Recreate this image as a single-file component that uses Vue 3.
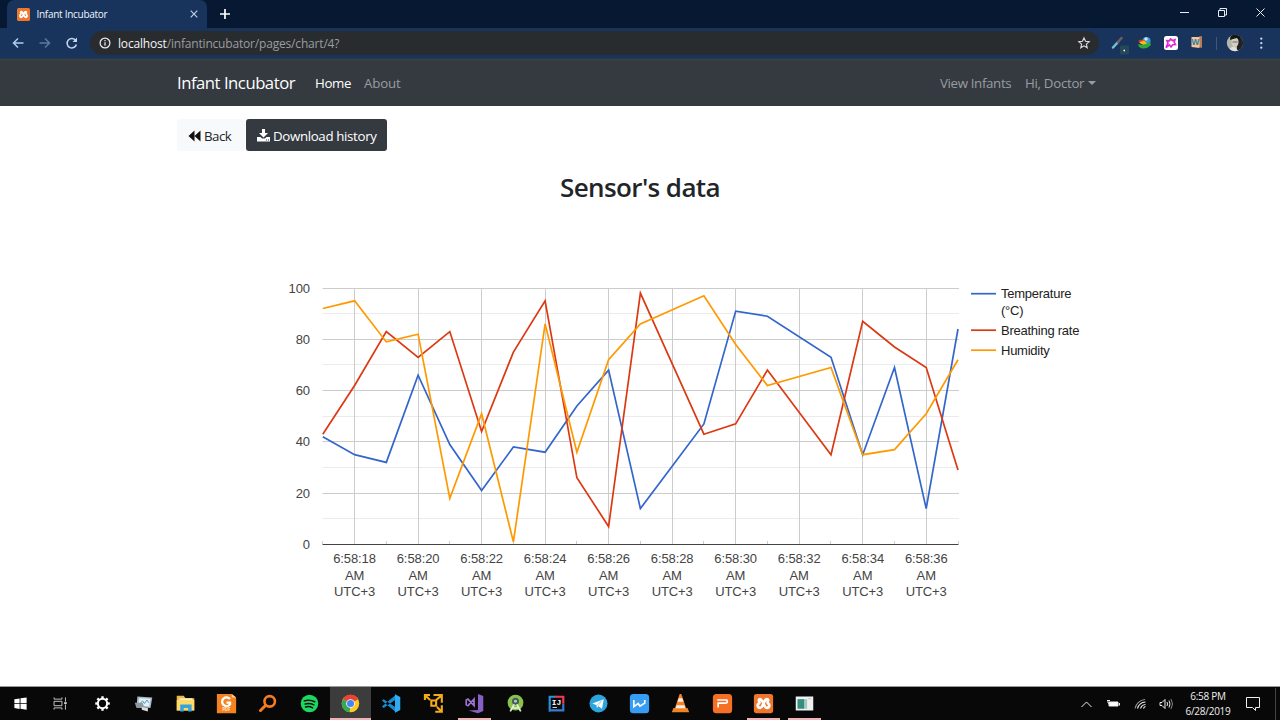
<script setup>
const seconds = [17, 18, 19, 20, 21, 22, 23, 24, 25, 26, 27, 29, 30, 31, 33, 34, 35, 36, 37]
const series = [
  { name: 'Temperature', color: '#3366cc', y: 24, data: [42, 35, 32, 66, 39, 21, 38, 36, 54, 68, 14, 47, 91, 89, 73, 35, 69, 14, 84] },
  { name: 'Breathing rate', color: '#dc3912', y: 60.5, data: [43, 62, 83, 73, 83, 44, 75, 95, 26, 7, 98, 43, 47, 68, 35, 87, 77, 69, 29] },
  { name: 'Humidity', color: '#ff9900', y: 80.5, data: [92, 95, 79, 82, 18, 51, 1, 86, 36, 72, 86, 97, 78, 62, 69, 35, 37, 51, 72] }
]
const px = s => 42.8 + (s - 17) * 31.76
const py = v => 274.5 - v * 2.565
const line = d => d.map((v, i) => `${px(seconds[i]).toFixed(1)},${py(v).toFixed(1)}`).join(' ')
const major = [18, 20, 22, 24, 26, 28, 30, 32, 34, 36]
const minor = [17, 19, 21, 23, 25, 27, 29, 31, 33, 35, 37]
const loop = 'M8.200 7C11.500 7 12.500 17 15.800 17S19.300 13 17.300 12S19.100 7 15.800 7C12.500 7 11.500 17 8.200 17S4.700 13 6.700 12S4.900 7 8.200 7z'
</script>

<template>
  <div class="screen">
    <header class="tabs">
      <div class="tab">
        <svg class="fav" viewBox="0 0 24 24"><rect width="24" height="24" rx="3" fill="#ee762d"/><path :d="loop" fill="none" stroke="#fff" stroke-width="3.400"/></svg>
        <span class="tabname">Infant Incubator</span>
        <svg class="close" viewBox="0 0 8 8"><path d="M.7.7l6.6 6.6M7.3.7L.7 7.3" stroke="#c6d3e5" stroke-width="1.1"/></svg>
      </div>
      <svg class="plus" viewBox="0 0 12 12"><path d="M6 1v10M1 6h10" stroke="#fff" stroke-width="1.7"/></svg>
      <svg class="winctl" viewBox="0 0 100 28" fill="none" stroke="#e8edf3"><path d="M0 12.500h9M76.500 8.500l8 8m0-8l-8 8M40 10.500V8.500h6.500V15h-2"/><path d="M38.500 10.500H44.500V16.500H38.500z"/></svg>
    </header>

    <div class="toolbar">
      <svg class="navicons" viewBox="0 0 90 31" fill="none" stroke-width="1.5">
        <path d="M23.500 15H14M18 10.500L13.500 15l4.500 4.500" stroke="#b3cbed"/>
        <path d="M39.500 15h9.500M45 10.500l4.500 4.500-4.500 4.500" stroke="#5c789f"/>
        <path d="M75.700 12.500a4.700 4.700 0 1 0 .7 4" stroke="#c4d6ef"/><path d="M77 9.500V14h-4.500z" fill="#c4d6ef"/>
      </svg>
      <div class="address">
        <svg class="info" viewBox="0 0 12 12" fill="none" stroke="#eee" stroke-width="1.2"><circle cx="6" cy="6" r="4.900"/><path d="M6 5.200v3.500M6 3v1.200"/></svg>
        <span class="url">localhost<i>/infantincubator/pages/chart/4?</i></span>
        <svg class="star" viewBox="0 0 12 12"><path d="M6 .9l1.500 3.400 3.700.4-2.800 2.400.8 3.700L6 8.900l-3.200 1.900.8-3.700L.8 4.700l3.700-.4z" fill="none" stroke="#ddd" stroke-width="1.100"/></svg>
      </div>
      <svg class="exts" viewBox="0 0 181 31">
        <path d="M14 19.500l5-5.500" stroke="#79bfd2" stroke-width="2.500" stroke-linecap="round"/><path d="M19 14l3.500-4" stroke="#735d5c" stroke-width="2.500" stroke-linecap="round"/><rect x="21" y="17.500" width="9" height="9" rx="1" fill="#26485a"/><path d="M24.500 22.500h1.500" stroke="#fff" stroke-width="1.500"/>
        <circle cx="47.500" cy="13" r="4" fill="#3c9ad8"/><path d="M39 13q4-3 8 0l-3 3z" fill="#e53a24"/><path d="M40 14.500l5-2 3 3-3 2z" fill="#f2bd1c"/><path d="M39 16q6 2 12-2l1 3q-6 6-12 2z" fill="#31a639"/><circle cx="47" cy="11" r="1.700" fill="#c5eaff"/>
        <rect x="65" y="8" width="14" height="14" rx="2.500" fill="#fff"/><path d="M71.500 11l2 1.500 2.500-.8-.8 2.600 1.300 2.200-2.700.3-1.800 2.200-1.600-2.200-3.400 2.700 2-4.500-1.200-2.300 2.600.2z" fill="none" stroke="#dd27d4" stroke-width="1.600"/>
        <path d="M100 8.500l3-.5v12l-3-1z" fill="#b77e58"/><path d="M92.500 9h8v11l-8-1z" fill="#fbc396"/><text x="92.500" y="17" font-size="8" font-weight="700" fill="#2681ac">W</text>
        <path d="M117.500 9v13" stroke="#40577c"/>
        <clipPath id="avatar"><circle cx="136" cy="15" r="8.200"/></clipPath><g clip-path="url(#avatar)"><path d="M127 6h18v18h-18z" fill="#b4b6ac"/><path d="M138 8h7v14h-7z" fill="#222"/><ellipse cx="136" cy="14" rx="3.500" ry="5" fill="#d9cdbf"/><path d="M131 12q0-7 6-6 5 0 4 6l-3-2-4 1z" fill="#161616"/><path d="M130 24q1-6 6-5l4 5z" fill="#e2e2dd"/><path d="M133.500 14h5" stroke="#517789"/></g>
        <g fill="#c5d8f2"><circle cx="162.300" cy="10.700" r="1.150"/><circle cx="162.300" cy="15.200" r="1.150"/><circle cx="162.300" cy="19.700" r="1.150"/></g>
      </svg>
    </div>

    <nav class="navbar">
      <span class="brand">Infant Incubator</span><span class="home">Home</span><span class="about">About</span>
      <span class="view">View Infants</span><span class="doctor">Hi, Doctor</span><b class="caret"></b>
    </nav>

    <main>
      <div class="actions">
        <button class="back"><svg viewBox="0 0 13 12"><path d="M6.500 .5v11L.5 6zM12.500 .5v11L6.500 6z" fill="#111"/></svg><span>Back</span></button>
        <button class="download"><svg viewBox="0 0 13 13" fill="#fff"><path d="M5 0h3v4h3L6.500 8.500 2 4h3z"/><path d="M0 8h3.500l1.700 1.600h2.600L9.500 8H13v4.500H0z"/><path d="M9 11h1M11 11h1" stroke="#343a40"/></svg><span>Download history</span></button>
      </div>
      <h2><span>Sensor's data</span></h2>
      <svg class="chart" viewBox="0 0 820 350">
        <g v-for="n in 11" :key="n">
          <path v-if="n > 1" :d="`M42.500 ${Math.floor(py((n - 1) * 10)) + .5}H679`" :stroke="n % 2 ? '#ccc' : '#ebebeb'"/>
        </g>
        <path v-for="s in major" :key="s" :d="`M${Math.floor(px(s)) + .5} 18V274`" stroke="#ccc"/>
        <path v-for="s in minor" :key="s" :d="`M${Math.floor(px(s)) + .5} 271V274`" stroke="#ccc"/>
        <path d="M42.500 274.500H678.500" stroke="#444"/>
        <polyline v-for="s in series" :key="s.name" :points="line(s.data)" :stroke="s.color" fill="none" stroke-width="1.700"/>
        <text v-for="n in 6" :key="n" x="30" :y="py((n - 1) * 20) + 4.500" text-anchor="end" class="axis">{{ (n - 1) * 20 }}</text>
        <text v-for="s in major" :key="s" class="axis" text-anchor="middle">
          <tspan :x="px(s)" y="293">6:58:{{ s }}</tspan><tspan :x="px(s)" y="309.500">AM</tspan><tspan :x="px(s)" y="326">UTC+3</tspan>
        </text>
        <g v-for="s in series" :key="s.name"><path :d="`M691 ${s.y - .3}h25`" :stroke="s.color" stroke-width="1.700"/><text class="legend" x="721" :y="s.y + 4.300">{{ s.name }}</text></g>
        <text class="legend" x="721" y="44.700">(°C)</text>
      </svg>
    </main>

    <footer class="taskbar">
      <div class="apps">
        <span><svg viewBox="0 0 24 24"><path d="M5 7.200l6-1v5.500H5zM12 6l7-1v6.700h-7zM5 12.700h6v5.500l-6-1zM12 12.700h7V19l-7-1z" fill="#fff"/></svg></span>
        <span><svg viewBox="0 0 24 24" fill="none" stroke="#d8d8d8"><path d="M3.500 5v2h9V5M3.500 19v-2h9v2M3.500 9.500h9v5h-9zM16.500 5v5M16.500 13v6"/><path d="M15 11.500h3" stroke-width="2"/></svg></span>
        <span><svg viewBox="0 0 24 24" fill="none" stroke="#fff"><circle cx="12" cy="12" r="5.300" stroke-width="2.300"/><path v-for="n in 8" :key="n" d="M12 3.700v3" stroke-width="2.700" :transform="`rotate(${n * 45} 12 12)`"/></svg></span>
        <span><svg viewBox="0 0 24 24"><path d="M5 4l17 1-2 12-16-1z" fill="#a6b8c3"/><path d="M7 6l13 .5-1.500 9L6 14z" fill="#e2f0f8"/><path d="M8 12l3-3 2 3 3-4 2 3" fill="none" stroke="#468caf"/><path d="M2 11h9l2 6H4z" fill="#8e989f"/><path d="M10 16l7 1v4l-7-2z" fill="#ddd"/></svg></span>
        <span><svg viewBox="0 0 24 24"><path d="M2 3h8l2 3h10v14H2z" fill="#e9b94e"/><path d="M5 6h15v10H5z" fill="#fff0b4"/><path d="M2 8h20v12H2z" fill="#ffd969"/><path d="M6 21v-8h13v8h-4v-4h-5v4z" fill="#33a5dc"/></svg></span>
        <span><svg viewBox="0 0 24 24"><path d="M1 1h17l5 4v18H1z" fill="#f58220"/><path d="M18 1v4h5z" fill="#ffd09b"/><path d="M16 7a5 5 0 1 0 0 6v-2h-4" fill="none" stroke="#fff" stroke-width="2.700"/><text x="7" y="21" font-size="5" font-weight="bold" fill="#ffe5c9">PDF</text></svg></span>
        <span><svg viewBox="0 0 24 24" fill="none" stroke="#f57c20"><circle cx="14.500" cy="9.500" r="6" stroke-width="3"/><path d="M10 14L4 20" stroke-width="3.500" stroke-linecap="round"/></svg></span>
        <span><svg viewBox="0 0 24 24"><circle cx="12" cy="12" r="10" fill="#1ed760"/><path d="M6 9q6-2 12 1M7 12.500q5-1.500 10 1M7.500 16q4-1.500 8 1" stroke="#111" stroke-width="1.700" fill="none" stroke-linecap="round"/></svg></span>
        <span class="chrome"><svg viewBox="0 0 24 24"><circle cx="12" cy="12" r="10" fill="#ffca28"/><path d="M12 12L3.300 7A10 10 0 0 1 20.700 7z" fill="#ea4335"/><path d="M3.300 7L12 12l-1 10A10 10 0 0 1 3.300 7z" fill="#34a853"/><circle cx="12" cy="12" r="5" fill="#eef5ff"/><circle cx="12" cy="12" r="4" fill="#4285f4"/></svg></span>
        <span><svg viewBox="0 0 24 24"><path d="M1 8.500l2-1.500L17 16.500V22zM1 15.500L3 17 17 7.500V2z" fill="#168bd2"/><path d="M16 1.500l6 3v15l-6 3z" fill="#33a9f2"/></svg></span>
        <span><svg viewBox="0 0 24 24" fill="none" stroke="#f5aa16" stroke-width="2.400"><path d="M2.200 8V2.200H8M3 3l5 5M12 2.200h9.500V11M21 3l-6 5M21.500 14v7.500H14M21 21l-5-5M9.500 8.500h5.500v6H9.500z"/></svg></span>
        <span class="open"><svg viewBox="0 0 24 24"><path d="M16 1l6 2.500v17L16 23 5 20l11-.5z" fill="#8661c5"/><path d="M2.500 8l2-1 7 7.500V7l-7 7.500-2-1z" fill="none" stroke="#9b72cf" stroke-width="1.900"/></svg></span>
        <span><svg viewBox="0 0 24 24"><circle cx="12" cy="11" r="9" fill="#8bc34a"/><circle cx="12" cy="9.500" r="4" fill="#455a64"/><path d="M10.500 13L6 21M13.500 13l4.500 8M9 16.500q3 1.500 6 0" fill="none" stroke="#e7eee1" stroke-width="2"/><circle cx="12" cy="9.500" r="1.700" fill="#b9d39a"/></svg></span>
        <span><svg viewBox="0 0 24 24"><path d="M3 3h9L5 21H3z" fill="#2595d8"/><path d="M10 3h11v9l-9 1z" fill="#ef385d"/><path d="M21 12v9H3l4-7z" fill="#3579d1"/><path d="M5.500 5.500h13v13h-13z" fill="#080808"/><text x="6.500" y="13.500" font-family="Liberation Mono" font-size="9" font-weight="700" fill="#fff">IJ</text><path d="M7.500 16.500h5" stroke="#fff"/></svg></span>
        <span><svg viewBox="0 0 24 24"><circle cx="12" cy="12" r="10.300" fill="#2ca5df"/><path d="M5 12l13-5-2 11-4-3-2 2v-3z" fill="#fff"/><path d="M9.500 14l6-5-4 6" stroke="#acd5e9" fill="none"/></svg></span>
        <span><svg viewBox="0 0 24 24"><rect x="1" y="1" width="22" height="22" rx="4" fill="#379df3"/><path d="M5.500 8v7.500l5-3.500 2 3 5.500-3.500V8" fill="none" stroke="#fff" stroke-width="1.900"/></svg></span>
        <span><svg viewBox="0 0 24 24"><path d="M4 17h16l2 5H2z" fill="#ed852a"/><path d="M11 1h2l6 18q-7 3-14 0z" fill="#f58220"/><path d="M10 6h4l1.500 4h-7zM7.500 14h9l1 3.500h-11z" fill="#eee"/></svg></span>
        <span><svg viewBox="0 0 24 24"><rect x="1" y="1" width="22" height="22" rx="4" fill="#f56f24"/><path d="M7 16.500v-5h8.500q2 0 2-2T15.500 8H6" fill="none" stroke="#fff" stroke-width="1.900"/></svg></span>
        <span class="open"><svg viewBox="0 0 24 24"><rect x="1" y="1" width="22" height="22" rx="3" fill="#ee762d"/><path :d="loop" fill="none" stroke="#fff" stroke-width="3.200"/></svg></span>
        <span class="open"><svg viewBox="0 0 24 24"><path d="M2 4h20v16H2z" fill="#eef1ef"/><path d="M4 7h8v11H4z" fill="#378e80"/><path d="M12 7h3v11h-3z" fill="#a2ccc0"/><path d="M16 6.500h4" stroke="#d5bac7"/></svg></span>
      </div>
      <svg class="tray" viewBox="0 0 100 34" fill="none" stroke="#eee">
        <path d="M8.500 20l5-5 5 5"/>
        <path d="M36 15h9v4h-9z" fill="#fff"/><path d="M46.500 16v2.500M35 13v3l2 1v2M34 13.500h3"/>
        <g stroke-width="1.050"><path d="M62 21.500A11 11 0 0 1 72 12.500" stroke="#999"/><path d="M64.500 21.500a9 9 0 0 1 8-6.500M67.500 21.500a6 6 0 0 1 5-4M70.500 21.500a3 3 0 0 1 2-2"/></g>
        <path d="M87 15.500h2l3-3v9l-3-3h-2zM94 15q1 2 0 4M96 13.500q2 3.500 0 7"/><path d="M98 12q3 5 0 10" stroke="#888"/>
      </svg>
      <div class="clock"><span>6:58 PM</span><span>6/28/2019</span></div>
      <svg class="notice" viewBox="0 0 16 16"><path d="M1.500 1.500h13v10h-4V14.500l-3-3h-6z" fill="none" stroke="#eee"/></svg>
      <i class="desktop"></i>
    </footer>
  </div>
</template>

<style>body{margin:0}</style>
<style scoped>
*{box-sizing:border-box}
svg{display:block;flex:none;overflow:visible}
.screen{width:1280px;height:720px;overflow:hidden;background:#fff;display:flex;flex-direction:column;font-family:"Open Sans","Noto Sans",sans-serif;white-space:nowrap}
.tabs{height:28px;background:#071832;display:flex;align-items:center;flex:none}
.tab{height:28px;width:200px;margin-left:7px;border-radius:7px 7px 0 0;background:#18345d;display:flex;align-items:center;padding-left:10px}
.fav{width:13px;height:13px}
.tabname{font-size:10px;letter-spacing:-.28px;color:#eef4fc;margin-left:6.500px;width:153px}
.close{width:8px;height:8px}
.plus{width:12px;height:12px;margin-left:12px}
.winctl{width:100px;height:28px;margin-left:949px}
.toolbar{height:31px;background:#18345d;border-bottom:1px solid #243a55;display:flex;align-items:center;flex:none}
.navicons{width:90px;height:31px}
.address{width:1009px;height:24px;border-radius:12px;background:#292c2f;display:flex;align-items:center;padding:0 9px;color:#f4f4f4}
.info{width:12px;height:12px}.url{font-size:12px;letter-spacing:-.49px;margin-left:7px;letter-spacing:-.18px}.url i{font-style:normal;color:#999ca0}.star{width:12px;height:12px;margin-left:auto}
.exts{width:181px;height:31px}
.navbar{height:47px;background:#343a40;border-top:2px solid #393e3f;display:flex;align-items:center;padding:0 0 2px 177px;color:#999da0;font-size:13.3px;flex:none}
.brand{font-size:16.700px;color:#fff;width:138px;letter-spacing:-.48px}.home{color:#fff;width:49px;letter-spacing:-.35px}.about{width:576px;letter-spacing:-.15px}.view{width:85px;letter-spacing:-.35px}.doctor{letter-spacing:-.3px;width:63px}.caret{border:4px solid transparent;border-top-color:#999da0;border-bottom:0}
main{height:580px;display:flex;flex-direction:column;padding-top:13px;flex:none}
.actions{display:flex;padding-left:177px;gap:1px}
button{border:0;height:32px;border-radius:3px;display:flex;align-items:center;font:13.300px "Open Sans","Noto Sans",sans-serif;padding:1px 0 0 11px;gap:3px}
.back{width:68px;background:#f8f9fa;color:#212529}.back svg{width:13px;height:12px}.back span{letter-spacing:-.5px}
.download{width:141px;background:#343a40;color:#fff}.download svg{width:13px;height:13px}.download span{letter-spacing:-.35px}
h2{margin:18px 0 0;height:36px;line-height:36px;text-align:center;font-size:26px;font-weight:600;color:#212529;letter-spacing:-.6px}
.chart{width:820px;height:350px;margin:65px 0 0 280px}
.axis,.legend{font-family:"Liberation Sans",Arial,sans-serif;font-size:13px}.axis{fill:#444;letter-spacing:-.1px}.legend{fill:#222;letter-spacing:-.25px}
.taskbar{height:34px;background:#080808;border-top:1px solid #999;display:flex;align-items:center;flex:none}
.apps{display:flex;height:33px;width:826px;margin-left:-.6px}
.apps span{width:41.300px;height:33px;display:flex;align-items:center;justify-content:center;flex:none;position:relative}
.apps svg{width:21px;height:21px}
.chrome{background:#3c3c3c}.chrome:after,.open:after{content:"";position:absolute;bottom:0;left:4px;right:4px;height:2px;background:#efb4b7}.chrome:after{left:0;right:0}
.tray{width:100px;height:34px;margin-left:247.600px}
.clock{width:70px;display:flex;flex-direction:column;align-items:center;color:#eee;font-size:10px;line-height:15px;letter-spacing:-.25px}
.notice{width:16px;height:16px;margin-left:2px}.desktop{height:32px;border-left:1px solid #444;margin-left:14px}
</style>
